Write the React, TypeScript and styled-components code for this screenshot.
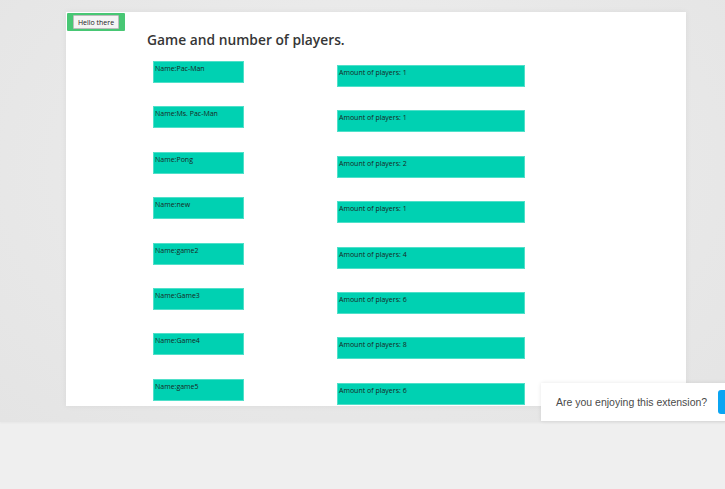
import React from "react";
import styled, { createGlobalStyle } from "styled-components";

const Global = createGlobalStyle`
  html, body { margin: 0; padding: 0; }
  body { width: 725px; height: 489px; overflow: hidden; background: #efefef; }
`;

const Screen = styled.div`
  position: relative;
  width: 725px;
  height: 489px;
  display: flex;
  flex-direction: column;
  background: #efefef;
  overflow: hidden;
`;

const Stage = styled.div`
  height: 422px;
  flex-shrink: 0;
  box-sizing: border-box;
  padding: 12px 0 0 66px;
  background: radial-gradient(ellipse at 50% 40%, #f1f1f1 0%, #e8e8e8 60%, #e4e4e4 100%);
  box-shadow: 0 1px 2px rgba(0, 0, 0, 0.04);
`;

const Panel = styled.div`
  width: 620px;
  height: 394px;
  box-sizing: border-box;
  padding: 1px;
  background: #ffffff;
  overflow: hidden;
  display: flex;
  flex-direction: column;
  box-shadow: 0 0 6px rgba(0, 0, 0, 0.06);
  & > * { flex-shrink: 0; }
`;

const Header = styled.div`
  width: 58px;
  height: 18px;
  box-sizing: border-box;
  background: #48c774;
  display: flex;
  align-items: center;
  padding-left: 6px;
  border-radius: 1px;
`;

const HelloButton = styled.button`
  width: 46px;
  height: 14px;
  box-sizing: border-box;
  font-family: "Open Sans", "Noto Sans", sans-serif;
  font-size: 7px;
  line-height: 1;
  color: #222;
  background: #f4f4f4;
  border: 1px solid #bdbdbd;
  padding: 0;
  margin: 0;
  border-radius: 1px;
  white-space: nowrap;
`;

const Title = styled.h1`
  margin: -1px 0 0 80px;
  font-family: "Open Sans", "Noto Sans", sans-serif;
  font-weight: 600;
  font-size: 13.8px;
  line-height: 20px;
  color: #363636;
`;

const List = styled.div`
  display: flex;
  flex-direction: column;
  gap: 19.4px;
  margin-top: 11px;
`;

const Row = styled.div`
  display: flex;
  align-items: flex-start;
  padding-left: 86px;
`;

const Cell = styled.div<{ $width: number; $offset: number; $left: number }>`
  width: ${(p) => p.$width}px;
  height: 22px;
  box-sizing: border-box;
  margin-left: ${(p) => p.$left}px;
  margin-top: ${(p) => p.$offset}px;
  background: #00d1b2;
  border: 1px solid #4fe0c9;
  padding: 2px 0 0 1px;
  font-family: "Open Sans", "Noto Sans", sans-serif;
  font-size: 7px;
  line-height: 9px;
  color: #1a2622;
  white-space: nowrap;
`;

const Prompt = styled.div`
  position: absolute;
  left: 541px;
  top: 383px;
  width: 200px;
  height: 38px;
  box-sizing: border-box;
  background: #ffffff;
  display: flex;
  align-items: center;
  gap: 11px;
  padding-left: 15px;
  box-shadow: 0 0 4px rgba(0, 0, 0, 0.1);
`;

const PromptText = styled.span`
  font-family: "Liberation Sans", Arial, sans-serif;
  font-size: 10.5px;
  color: #4a4a4a;
  white-space: nowrap;
`;

const PromptButton = styled.div`
  width: 40px;
  height: 24px;
  border-radius: 3px;
  background: #0ba5f2;
  flex-shrink: 0;
`;

const games = [
  { name: "Pac-Man", players: 1 },
  { name: "Ms. Pac-Man", players: 1 },
  { name: "Pong", players: 2 },
  { name: "new", players: 1 },
  { name: "game2", players: 4 },
  { name: "Game3", players: 6 },
  { name: "Game4", players: 8 },
  { name: "game5", players: 6 },
];

export default function App() {
  return (
    <>
      <Global />
      <Screen>
        <Stage>
          <Panel>
            <Header>
              <HelloButton>Hello there</HelloButton>
            </Header>
            <Title>Game and number of players.</Title>
            <List>
              {games.map((g) => (
                <Row key={g.name}>
                  <Cell $width={91} $offset={0} $left={0}>
                    Name:{g.name}
                  </Cell>
                  <Cell $width={188} $offset={4} $left={93}>
                    Amount of players: {g.players}
                  </Cell>
                </Row>
              ))}
            </List>
          </Panel>
        </Stage>
        <Prompt>
          <PromptText>Are you enjoying this extension?</PromptText>
          <PromptButton />
        </Prompt>
      </Screen>
    </>
  );
}
